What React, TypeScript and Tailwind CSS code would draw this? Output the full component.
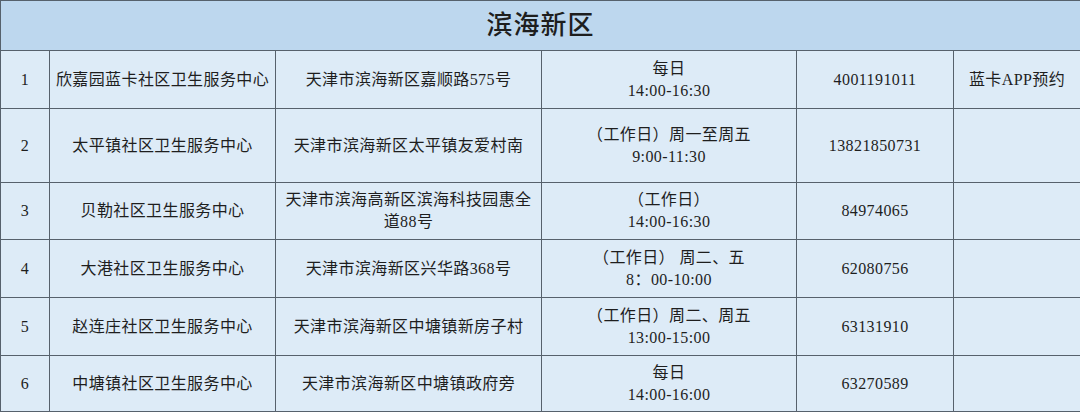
const rows = [
  {
    no: "1",
    name: "欣嘉园蓝卡社区卫生服务中心",
    addr: ["天津市滨海新区嘉顺路575号"],
    time: ["每日", "14:00-16:30"],
    phone: "4001191011",
    note: "蓝卡APP预约",
    h: "h-[58px]",
  },
  {
    no: "2",
    name: "太平镇社区卫生服务中心",
    addr: ["天津市滨海新区太平镇友爱村南"],
    time: ["（工作日）周一至周五", "9:00-11:30"],
    phone: "13821850731",
    note: "",
    h: "h-[74px]",
  },
  {
    no: "3",
    name: "贝勒社区卫生服务中心",
    addr: ["天津市滨海高新区滨海科技园惠全", "道88号"],
    time: ["（工作日）", "14:00-16:30"],
    phone: "84974065",
    note: "",
    h: "h-[57px]",
  },
  {
    no: "4",
    name: "大港社区卫生服务中心",
    addr: ["天津市滨海新区兴华路368号"],
    time: ["（工作日） 周二、五", "8：00-10:00"],
    phone: "62080756",
    note: "",
    h: "h-[58px]",
  },
  {
    no: "5",
    name: "赵连庄社区卫生服务中心",
    addr: ["天津市滨海新区中塘镇新房子村"],
    time: ["（工作日）周二、周五", "13:00-15:00"],
    phone: "63131910",
    note: "",
    h: "h-[58px]",
  },
  {
    no: "6",
    name: "中塘镇社区卫生服务中心",
    addr: ["天津市滨海新区中塘镇政府旁"],
    time: ["每日", "14:00-16:00"],
    phone: "63270589",
    note: "",
    h: "h-[56px]",
  },
];

const cell = "border border-[#56616c] text-center align-middle px-1";

export default function App() {
  return (
    <div
      className="w-[1080px] h-[412px] overflow-hidden bg-[#ddebf7] text-[#1e1e1e]"
      style={{ fontFamily: '"Liberation Serif", "Noto Sans CJK SC", serif' }}
    >
      <table className="w-[1080px] table-fixed border-collapse text-[16px] leading-[22px] tracking-[0.4px]">
        <colgroup>
          <col className="w-[49px]" />
          <col className="w-[226px]" />
          <col className="w-[266px]" />
          <col className="w-[255px]" />
          <col className="w-[157px]" />
          <col className="w-[127px]" />
        </colgroup>
        <thead>
          <tr className="h-[50px]">
            <th
              colSpan={6}
              className="border border-[#56616c] bg-[#bdd7ee] text-center align-middle text-[26px] font-medium tracking-[1px]"
            >
              滨海新区
            </th>
          </tr>
        </thead>
        <tbody>
          {rows.map((r) => (
            <tr key={r.no} className={r.h}>
              <td className={cell}>{r.no}</td>
              <td className={cell}>{r.name}</td>
              <td className={cell}>
                {r.addr.map((a) => (
                  <div key={a}>{a}</div>
                ))}
              </td>
              <td className={cell}>
                {r.time.map((t) => (
                  <div key={t}>{t}</div>
                ))}
              </td>
              <td className={cell}>{r.phone}</td>
              <td className={cell}>{r.note}</td>
            </tr>
          ))}
        </tbody>
      </table>
    </div>
  );
}
